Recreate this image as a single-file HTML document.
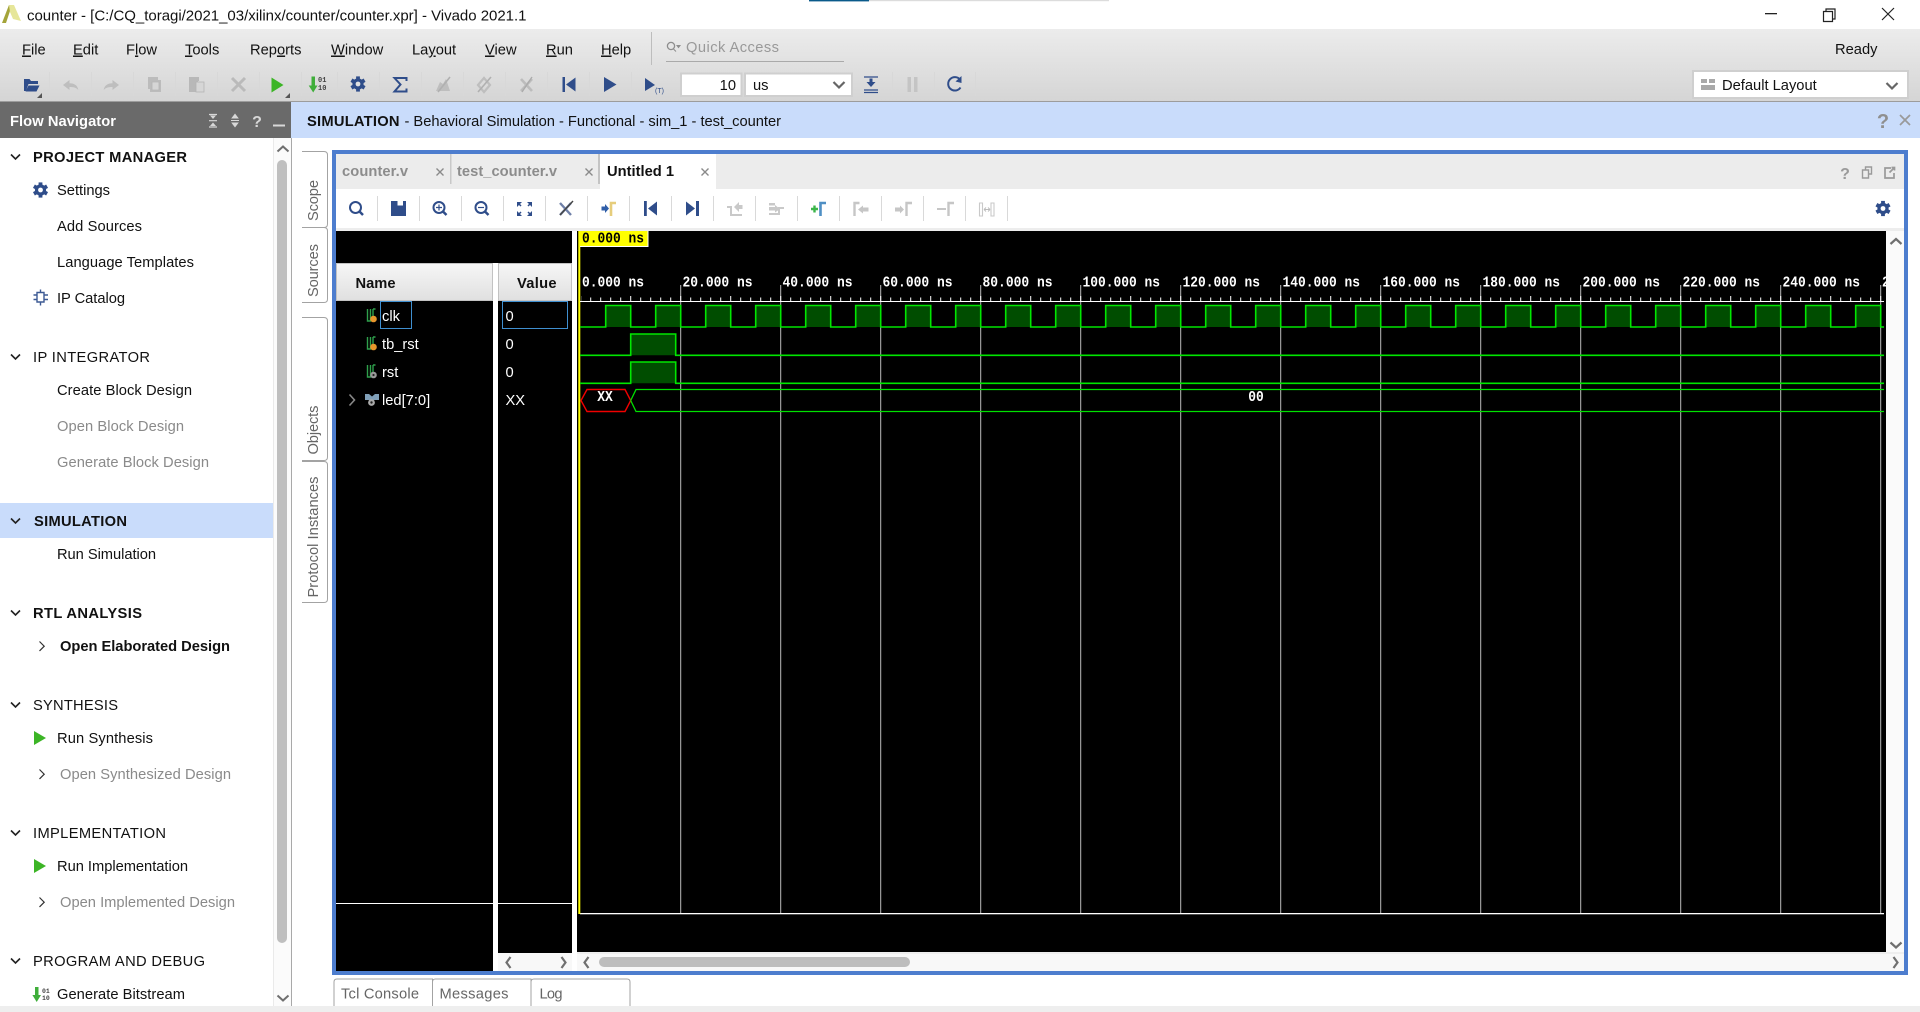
<!DOCTYPE html>
<html><head><meta charset="utf-8"><title>counter - Vivado 2021.1</title>
<style>
html,body{margin:0;padding:0;background:#fff;width:1920px;height:1012px;overflow:hidden}
svg{position:absolute;left:0;top:0;display:block}
text{font-family:"Liberation Sans",sans-serif;font-size:14.7px;fill:#111;white-space:pre}
.b{font-weight:bold}
.g{fill:#8a8a8a}
.w{fill:#fff}
.m{font-family:"Liberation Mono",monospace;font-size:15px;font-weight:bold;fill:#fff}
.s{fill:none;stroke-linecap:butt}
</style></head><body>
<svg width="1920" height="1012" viewBox="0 0 1920 1012" xmlns="http://www.w3.org/2000/svg">
<defs>
<linearGradient id="tb" x1="0" y1="0" x2="0" y2="1"><stop offset="0" stop-color="#ececec"/><stop offset="1" stop-color="#d5d5d5"/></linearGradient>
<linearGradient id="hd" x1="0" y1="0" x2="0" y2="1"><stop offset="0" stop-color="#f6f6f6"/><stop offset="1" stop-color="#e0e0e0"/></linearGradient>
<g id="gear"><circle r="5.6" fill="#2f4d8a"/><g fill="#2f4d8a"><rect x="-1.9" y="-7.6" width="3.8" height="15.2"/><rect x="-1.9" y="-7.6" width="3.8" height="15.2" transform="rotate(60)"/><rect x="-1.9" y="-7.6" width="3.8" height="15.2" transform="rotate(120)"/></g><circle r="2.4" fill="currentColor"/></g>
<g id="sig"><path d="M.5 0V12H3.500V0M6 0V7M8.500 0H6" fill="none" stroke="#2fa04c" stroke-width="1.400"/></g>
</defs>

<!-- title bar -->
<rect width="1920" height="29" fill="#fff"/>
<rect x="809" y="0" width="60" height="1.400" fill="#0a5a8a"/><rect x="869" y="0" width="240" height="1.200" fill="#dcdcdc"/>
<polygon points="2,23 9,5 12,5 8,17 6,23" fill="#a4a43a"/><polygon points="9,5 14,5 21,21 13,19 10,12" fill="#e6e69a"/>
<text x="27" y="20.500" style="font-size:15px" textLength="499.500">counter - [C:/CQ_toragi/2021_03/xilinx/counter/counter.xpr] - Vivado 2021.1</text>
<rect x="1765" y="13" width="12" height="1.300" fill="#222"/>
<path d="M1823.500 11.500h9v10h-9zM1826 11.500v-2.500h9v10h-2.500" fill="none" stroke="#222" stroke-width="1.200"/>
<path d="M1882 8l12 12M1894 8l-12 12" stroke="#222" stroke-width="1.200" fill="none"/>

<!-- menu/tool -->
<rect x="0" y="29" width="1920" height="72" fill="url(#tb)"/>
<rect x="0" y="101" width="1920" height="1" fill="#9c9c9c"/>
<text x="22" y="54.500"><tspan style="text-decoration:underline">F</tspan>ile</text>
<text x="73" y="54.500"><tspan style="text-decoration:underline">E</tspan>dit</text>
<text x="126" y="54.500">F<tspan style="text-decoration:underline">l</tspan>ow</text>
<text x="185" y="54.500"><tspan style="text-decoration:underline">T</tspan>ools</text>
<text x="250" y="54.500">Rep<tspan style="text-decoration:underline">o</tspan>rts</text>
<text x="331" y="54.500"><tspan style="text-decoration:underline">W</tspan>indow</text>
<text x="412" y="54.500">La<tspan style="text-decoration:underline">y</tspan>out</text>
<text x="485" y="54.500"><tspan style="text-decoration:underline">V</tspan>iew</text>
<text x="546" y="54.500"><tspan style="text-decoration:underline">R</tspan>un</text>
<text x="601" y="54.500"><tspan style="text-decoration:underline">H</tspan>elp</text>
<rect x="651" y="32" width="1" height="33" fill="#bdbdbd"/>
<circle cx="671" cy="46" r="3.600" fill="none" stroke="#8d8d8d" stroke-width="1.300"/><path d="M673.500 49l2.500 2.500M677 45.500h3l-1.500 2z" stroke="#8d8d8d" fill="#8d8d8d"/>
<text x="686" y="52" style="fill:#999" textLength="93">Quick Access</text>
<rect x="666" y="61" width="178" height="1" fill="#aaa"/>
<text x="1835" y="54">Ready</text>

<!-- toolbar separators -->
<path d="M49.500 72v24M91.500 72v24M133.500 72v24M175.500 72v24M217.500 72v24M259.500 72v24M301.500 72v24M337.500 72v24M379.500 72v24M421.500 72v24M463.500 72v24M505.500 72v24M547.500 72v24M589.500 72v24M631.500 72v24M892.500 72v24M934.500 72v24M975.500 72v24" stroke="#d8d8d8" stroke-width="1"/>
<!-- open -->
<path d="M24 91V79h5.500l1.500 2h7v3H28.500L26 91z" fill="#2f4d8a"/><path d="M28.500 85.500H39.500L36.500 91.500H25.500z" fill="#2f4d8a"/>
<polygon points="42,93 42,98 37,98" fill="#555"/>
<!-- undo redo -->
<path d="M63 85l6.500-5v3.200c5 0 8.200 2.300 8.800 6.800-2.300-2.700-5.300-3-8.800-3V90z" fill="#bebebe"/>
<path d="M119 85l-6.500-5v3.200c-5 0-8.200 2.300-8.800 6.800 2.300-2.700 5.300-3 8.800-3V90z" fill="#bebebe"/>
<!-- copy paste -->
<path d="M148 77h10v3h3v12h-11v-3h-2z" fill="#bcbcbc"/><path d="M152 82h7v8h-7z" fill="#d6d6d6" stroke="#b5b5b5" stroke-width=".8"/>
<path d="M189 77h10v4h-1v11h-9z" fill="#b8b8b8"/><rect x="196" y="82" width="8" height="10" fill="#d6d6d6" stroke="#b5b5b5" stroke-width=".8"/>
<path d="M232 78l13 13M245 78l-13 13" stroke="#bababa" stroke-width="3" fill="none"/>
<!-- run -->
<polygon points="271.500,77.500 283.500,85 271.500,92.500" fill="#3cb526"/><polygon points="290,93 290,98 285,98" fill="#555"/>
<!-- bitstream -->
<path d="M311.500 76.500h3.500v9h2.500l-4.300 7-4.500-7h2.800z" fill="#3fae3a"/>
<text x="318" y="82" style="font-family:'Liberation Mono',monospace;font-size:7px;font-weight:bold;fill:#444">01</text><text x="318" y="90" style="font-family:'Liberation Mono',monospace;font-size:7px;font-weight:bold;fill:#444">10</text>
<use href="#gear" x="358" y="84" color="#e2e2e2"/>
<path d="M406.500 81v-3H394.500l6 6.500-6 7h12v-3" fill="none" stroke="#2f4d8a" stroke-width="2"/>
<!-- grey icons -->
<path d="M436 91h14l-4-12-3 5-3-2z" fill="#bebebe"/><path d="M438 92l12-15" stroke="#b0b0b0" stroke-width="1.600"/>
<path d="M478 85l6-7 6 7-6 7z" fill="none" stroke="#bebebe" stroke-width="2.200"/><path d="M478 92l13-15" stroke="#b0b0b0" stroke-width="1.600"/>
<path d="M521 79l11 12M532 79l-11 12" stroke="#bcbcbc" stroke-width="2.600"/><path d="M522 92l10-15" stroke="#aaa" stroke-width="1.300"/>
<rect x="562.500" y="77" width="2.500" height="15" fill="#2f4d8a"/><polygon points="575.500,77.500 566,84.500 575.500,91.500" fill="#2f4d8a"/>
<polygon points="604,77 616.500,84.500 604,92" fill="#2f4d8a"/>
<polygon points="645,78 655,85 645,91" fill="#2f4d8a"/>
<text x="655" y="93" style="font-size:7px;fill:#2f4d8a">(T)</text>
<!-- input -->
<rect x="681" y="73.500" width="60.500" height="22.500" fill="#fff" stroke="#cfcfcf" stroke-width="2"/>
<text x="736" y="90" text-anchor="end">10</text>
<rect x="745" y="73.500" width="107" height="22.500" fill="#fff" stroke="#cfcfcf" stroke-width="2"/>
<text x="753" y="90">us</text>
<path d="M833.500 82l5.500 5.500 5.500-5.500" fill="none" stroke="#666" stroke-width="2.200"/>
<path d="M864 77h14M864 90h14M864 92.500h14" stroke="#2f4d8a" stroke-width="1.300"/><path d="M869.500 78.500h3v3.500h3l-4.500 5-4.500-5h3z" fill="#2f4d8a"/>
<rect x="907.500" y="77" width="3.500" height="15" fill="#c4c4c4"/><rect x="914" y="77" width="3.500" height="15" fill="#c4c4c4"/>
<path d="M960 79.500a6.700 6.700 0 1 0 .5 8" fill="none" stroke="#2f4d8a" stroke-width="2"/><polygon points="961.500,76 961.500,83 955.500,81.500" fill="#2f4d8a"/>
<!-- layout combo -->
<rect x="1693" y="71" width="215" height="27" fill="#fff" stroke="#cfcfcf" stroke-width="2"/>
<path d="M1701 79h6v4h-6zM1709 79h6v4h-6zM1701 85h14v5h-14z" fill="#a9a9a9"/>
<text x="1722" y="90">Default Layout</text>
<path d="M1886.500 83l5.500 5.500 5.500-5.500" fill="none" stroke="#666" stroke-width="2.200"/>

<!-- flow nav header -->
<rect x="0" y="102" width="291" height="36" fill="#6a6a6a"/>
<text x="10" y="126" class="b w" textLength="106">Flow Navigator</text>
<path d="M209 114.500h8M209 127h8M209 120.700h8" stroke="#d8d8d8" stroke-width="1.200"/><path d="M210 115.500h6l-3 3.500zM210 126l3-3.500 3 3.500z" fill="#d8d8d8"/>
<path d="M235 113.500l3.800 5h-7.600zM235 127.500l3.800-5h-7.600z" fill="#d8d8d8"/><path d="M231 120.500h8" stroke="#d8d8d8"/>
<text x="257" y="127" text-anchor="middle" class="b" style="fill:#d8d8d8;font-size:16px">?</text>
<rect x="273" y="124.500" width="12" height="2" fill="#d8d8d8"/>
<rect x="291" y="102" width="1629" height="36" fill="#c9dcfb"/>
<text x="307" y="126" class="b" textLength="92.500">SIMULATION</text>
<text x="404.500" y="126" textLength="376.500">- Behavioral Simulation - Functional - sim_1 - test_counter</text>
<text x="1883" y="128" text-anchor="middle" class="b" style="fill:#8f8f8f;font-size:20px">?</text>
<path d="M1900 115l10 10M1910 115l-10 10" stroke="#999" stroke-width="1.700"/>

<!-- left panel -->
<rect x="0" y="138" width="273" height="868" fill="#fff"/>
<rect x="273" y="138" width="18" height="868" fill="#fbfbfb"/><rect x="273" y="138" width="1" height="868" fill="#eaeaea"/>
<rect x="277" y="160" width="10" height="783" rx="5" fill="#bfbfbf"/>
<path d="M277.500 151.500l5.500-5 5.500 5" fill="none" stroke="#6f6f6f" stroke-width="2"/>
<path d="M277.500 995.500l5.500 5 5.500-5" fill="none" stroke="#6f6f6f" stroke-width="2"/>
<rect x="291" y="138" width="1" height="868" fill="#a9a9a9"/>
<rect x="0" y="503" width="273" height="35" fill="#c9dcfb"/>
<g fill="none" stroke="#222" stroke-width="1.600">
<path d="M11 154.500l4.500 4.500 4.500-4.500"/><path d="M11 354.500l4.500 4.500 4.500-4.500"/><path d="M11 518.500l4.500 4.500 4.500-4.500"/><path d="M11 610.500l4.500 4.500 4.500-4.500"/><path d="M11 702.500l4.500 4.500 4.500-4.500"/><path d="M11 830.500l4.500 4.500 4.500-4.500"/><path d="M11 958.500l4.500 4.500 4.500-4.500"/>
</g>
<g fill="none" stroke="#333" stroke-width="1.200">
<path d="M39.500 641.500l4.700 4.700-4.700 4.700"/><path d="M39.500 769.500l4.700 4.700-4.700 4.700"/><path d="M39.500 897.500l4.700 4.700-4.700 4.700"/>
</g>
<text x="33" y="162" class="b" textLength="154">PROJECT MANAGER</text>
<use href="#gear" x="40.500" y="190" color="#fff"/>
<text x="57" y="195" textLength="53">Settings</text>
<text x="57" y="231" textLength="85">Add Sources</text>
<text x="57" y="267" textLength="137">Language Templates</text>
<path d="M37 292.500h7v9.500h-7zM40.500 289.500v3M40.500 302v3.500M33.500 295h3.500M33.500 299.500h3.500M44 295h4M44 299.500h4" fill="none" stroke="#3d5a94" stroke-width="1.400"/>
<text x="57" y="303" textLength="68">IP Catalog</text>
<text x="33" y="362" textLength="117">IP INTEGRATOR</text>
<text x="57" y="395" textLength="135">Create Block Design</text>
<text x="57" y="431" class="g" textLength="127">Open Block Design</text>
<text x="57" y="467" class="g" textLength="152">Generate Block Design</text>
<text x="34" y="526" class="b" textLength="93">SIMULATION</text>
<text x="57" y="559" textLength="99">Run Simulation</text>
<text x="33" y="618" class="b" textLength="109">RTL ANALYSIS</text>
<text x="60" y="651" class="b" textLength="170">Open Elaborated Design</text>
<text x="33" y="710" textLength="85">SYNTHESIS</text>
<polygon points="34,731 46,738 34,745" fill="#3cb526"/>
<text x="57" y="743" textLength="96">Run Synthesis</text>
<text x="60" y="779" class="g" textLength="171">Open Synthesized Design</text>
<text x="33" y="838" textLength="133">IMPLEMENTATION</text>
<polygon points="34,859 46,866 34,873" fill="#3cb526"/>
<text x="57" y="871" textLength="131">Run Implementation</text>
<text x="60" y="907" class="g" textLength="175">Open Implemented Design</text>
<text x="33" y="966" textLength="172">PROGRAM AND DEBUG</text>
<path d="M35 987h3.500v8h2.500l-4.300 7-4.300-7h2.600z" fill="#3fae3a"/>
<text x="42" y="993" style="font-family:'Liberation Mono',monospace;font-size:6.500px;font-weight:bold;fill:#444">01</text><text x="42" y="1000" style="font-family:'Liberation Mono',monospace;font-size:6.500px;font-weight:bold;fill:#444">10</text>
<text x="57" y="999" textLength="128">Generate Bitstream</text>

<!-- side tabs -->
<g fill="none" stroke="#a3a3a3" stroke-width="1">
<path d="M302 151.500h22q3.500 0 3.500 3.500v69q0 3.500-3.500 3.500H302"/>
<path d="M302 227.500h22q3.500 0 3.500 3.500v68q0 3.500-3.500 3.500H302"/>
<path d="M302 317.500h22q3.500 0 3.500 3.500v136q0 3.500-3.500 3.500H302"/>
<path d="M302 461.500h22q3.500 0 3.500 3.500v134q0 3.500-3.500 3.500H302"/>
</g>
<text transform="translate(318,221) rotate(-90)" style="fill:#666" textLength="41">Scope</text>
<text transform="translate(318,297) rotate(-90)" style="fill:#666" textLength="53">Sources</text>
<text transform="translate(318,454.500) rotate(-90)" style="fill:#666" textLength="49">Objects</text>
<text transform="translate(318,597.500) rotate(-90)" style="fill:#666" textLength="121">Protocol Instances</text>

<!-- main frame -->
<rect x="332" y="150" width="1576" height="825" fill="#4d7dce"/>
<rect x="336" y="154" width="1568" height="817" fill="#fff"/>
<rect x="336" y="154" width="1568" height="35" fill="#ececec"/>
<rect x="600" y="154" width="116" height="35" fill="#fff"/>
<rect x="450" y="154" width="1.500" height="30" fill="#c8c8c8"/>
<rect x="598" y="154" width="2" height="30" fill="#c4c4c4"/>
<text x="342" y="176" class="b" style="fill:#8c8c8c" textLength="66">counter.v</text>
<text x="457" y="176" class="b" style="fill:#8c8c8c" textLength="100">test_counter.v</text>
<text x="607" y="176" class="b" textLength="67">Untitled 1</text>
<path d="M436.500 168.500l7 7M443.500 168.500l-7 7M585.500 168.500l7 7M592.500 168.500l-7 7M701.500 168.500l7 7M708.500 168.500l-7 7" stroke="#8a8a8a" stroke-width="1.400"/>
<text x="1845" y="179" text-anchor="middle" class="b" style="fill:#9a9a9a;font-size:16px">?</text>
<path d="M1862.500 170h6v8h-6zM1865.500 170v-3h6v7h-3" fill="none" stroke="#9a9a9a" stroke-width="1.400"/>
<path d="M1891 168h-6v10h9v-5M1889.500 172.500l4.500-4.500M1891.500 167.500h3v3" fill="none" stroke="#9a9a9a" stroke-width="1.700"/>

<!-- wave toolbar -->
<rect x="336" y="228" width="1568" height="3" fill="#ededed"/>
<path d="M377.500 196v25M419.500 196v25M461.500 196v25M503.500 196v25M545.500 196v25M587.500 196v25M629.500 196v25M671.500 196v25M713.500 196v25M755.500 196v25M797.500 196v25M839.500 196v25M881.500 196v25M923.500 196v25M965.500 196v25M1007.500 196v25" stroke="#d9d9d9" stroke-width="1"/>
<g fill="none" stroke="#2f4d8a" stroke-width="2">
<circle cx="355.500" cy="207.500" r="5.500"/><path d="M359.500 211.500l3.500 3.500" stroke-width="2.500"/>
<circle cx="439" cy="207.500" r="5.500"/><path d="M443 211.500l3.500 3.500" stroke-width="2.500"/><path d="M436 207.500h6M439 204.500v6" stroke-width="1.200"/>
<circle cx="481" cy="207.500" r="5.500"/><path d="M485 211.500l3.500 3.500" stroke-width="2.500"/><path d="M478 207.500h6" stroke-width="1.200"/>
</g>
<path d="M391 201h15v15h-15z" fill="#2f4d8a"/><rect x="397.500" y="201" width="5.500" height="4.500" fill="#fff"/>
<g fill="#2f4d8a"><polygon points="517,202 522,202 517,207"/><polygon points="532,202 527,202 532,207"/><polygon points="517,216 522,216 517,211"/><polygon points="532,216 527,216 532,211"/></g>
<path d="M518 203l3 3M531 203l-3 3M518 215l3-3M531 215l-3-3" stroke="#2f4d8a" stroke-width="1.500"/>
<path d="M560 203l11 12M571 203l-11 12" stroke="#6f80a8" stroke-width="2.400"/><path d="M560 215l13-14" stroke="#444" stroke-width="1.400"/>
<path d="M601.500 206.500h3.500v-2.500l4 4.500-4 4.500v-2.500h-3.500z" fill="#2f5ea8"/>
<path d="M611 216v-13h5" fill="none" stroke="#e6cd7c" stroke-width="2.600"/>
<rect x="644" y="201" width="2.800" height="15" fill="#2f4d8a"/><polygon points="657,201.500 648,208.500 657,215.500" fill="#2f4d8a"/>
<polygon points="686,201.500 695,208.500 686,215.500" fill="#2f4d8a"/><rect x="696" y="201" width="3" height="15" fill="#2f4d8a"/>
<g fill="#c9c9c9">
<path d="M727 206h5v8h10v2h-12v-8h-3z"/><path d="M734 207l5-5v3h3.500v4H739v3z"/>
<path d="M769 203h6v2.500h-6zM769 207h6v-2l5 4-5 3.500v-2h-6z"/><path d="M769 213h9v-6h6v2h-4v6h-11z"/>
</g>
<path d="M811 209h7M814.500 205.500v7" stroke="#3cb54a" stroke-width="2.400"/>
<path d="M820.500 216v-13h5.500" fill="none" stroke="#4f8fc4" stroke-width="2.600"/>
<g fill="none" stroke="#c6c6c6" stroke-width="2.400">
<path d="M854.500 216v-13h5"/><path d="M906.500 216v-13h5.500"/><path d="M948.500 216v-13h5.500"/>
</g>
<path d="M858 209.500l5-4v2h5.500v4H863v2z" fill="#c6c6c6"/>
<path d="M895 207.500h5v-2l4 4-4 4v-2h-5z" fill="#c6c6c6"/>
<rect x="937" y="208" width="9" height="2" fill="#c6c6c6"/>
<path d="M979.500 203h3v13h-3zM991 203h3v13h-3z" fill="none" stroke="#c9c9c9" stroke-width="1.100"/><path d="M984 209.500h6M984 209.500l2-2M984 209.500l2 2M990 209.500l-2-2M990 209.500l-2 2" stroke="#bbb" stroke-width=".9" fill="none"/>
<use href="#gear" x="1883" y="208.500" color="#fff"/>

<!-- name/value panels -->
<rect x="336" y="231" width="236" height="721" fill="#000"/>
<rect x="336" y="231" width="157" height="740" fill="#000"/>
<rect x="498" y="263" width="74" height="690" fill="#000"/>
<rect x="493" y="263" width="5" height="708" fill="#fff"/>
<rect x="336.500" y="263.500" width="156" height="37" fill="url(#hd)" stroke="#c2c2c2"/>
<rect x="498.500" y="263.500" width="73" height="37" fill="url(#hd)" stroke="#c2c2c2"/>
<text x="355.500" y="288" class="b" textLength="40">Name</text>
<text x="517" y="288" class="b" textLength="39.500">Value</text>
<rect x="380.500" y="301.500" width="31" height="27" fill="none" stroke="#3f8fd0"/>
<rect x="502.500" y="301.500" width="65" height="27" fill="none" stroke="#3f8fd0"/>
<use href="#sig" x="367" y="309"/><circle cx="373.500" cy="319" r="3.300" fill="#e8962c"/>
<use href="#sig" x="367" y="337"/><circle cx="373.500" cy="347" r="3.300" fill="#e8962c"/>
<use href="#sig" x="367" y="365"/><circle cx="373.500" cy="375" r="3.300" fill="#999"/><circle cx="373.500" cy="375" r="1.100" fill="#222"/>
<path d="M365 394h4l3 2.500 3-2.500h4v6h-14z" fill="#7f9fb8"/><circle cx="371.500" cy="402.500" r="3.400" fill="#aaa"/><circle cx="371.500" cy="402.500" r="1.200" fill="#222"/>
<path d="M349.500 394.500l5 5.500-5 5.500" fill="none" stroke="#888" stroke-width="1.600"/>
<text x="382" y="321" class="w">clk</text>
<text x="382" y="349" class="w">tb_rst</text>
<text x="382" y="377" class="w">rst</text>
<text x="382" y="405" class="w">led[7:0]</text>
<text x="505.500" y="321" class="w">0</text>
<text x="505.500" y="349" class="w">0</text>
<text x="505.500" y="377" class="w">0</text>
<text x="505.500" y="405" class="w">XX</text>
<rect x="336" y="903" width="157" height="1" fill="#fff"/><rect x="498" y="903" width="74" height="1" fill="#fff"/>

<!-- wave area -->
<rect x="577" y="231" width="1309" height="721" fill="#000"/>
<rect x="572" y="263" width="5" height="708" fill="#fff"/>
<path d="M680.700 285V913M780.700 285V913M880.700 285V913M980.700 285V913M1080.700 285V913M1180.700 285V913M1280.700 285V913M1380.700 285V913M1480.700 285V913M1580.700 285V913M1680.700 285V913M1780.700 285V913M1880.700 285V913" stroke="#bcbcbc" stroke-width="1" fill="none"/>
<rect x="580" y="913" width="1304" height="1.300" fill="#fff"/>
<rect x="578.300" y="231" width="2" height="683" fill="#ffff00"/>
<rect x="580" y="231" width="68" height="15.500" fill="#ffff00"/><path d="M648 231v15.500h-68" fill="none" stroke="#fff" stroke-width="1"/>
<text x="582" y="242.500" class="m" style="fill:#000" lengthAdjust="spacingAndGlyphs" textLength="62">0.000 ns</text>
<g>
<text x="582" y="286.500" class="m" lengthAdjust="spacingAndGlyphs" textLength="62">0.000 ns</text>
<text x="682.500" y="286.500" class="m" lengthAdjust="spacingAndGlyphs" textLength="70">20.000 ns</text>
<text x="782.500" y="286.500" class="m" lengthAdjust="spacingAndGlyphs" textLength="70">40.000 ns</text>
<text x="882.500" y="286.500" class="m" lengthAdjust="spacingAndGlyphs" textLength="70">60.000 ns</text>
<text x="982.500" y="286.500" class="m" lengthAdjust="spacingAndGlyphs" textLength="70">80.000 ns</text>
<text x="1082.500" y="286.500" class="m" lengthAdjust="spacingAndGlyphs" textLength="77.500">100.000 ns</text>
<text x="1182.500" y="286.500" class="m" lengthAdjust="spacingAndGlyphs" textLength="77.500">120.000 ns</text>
<text x="1282.500" y="286.500" class="m" lengthAdjust="spacingAndGlyphs" textLength="77.500">140.000 ns</text>
<text x="1382.500" y="286.500" class="m" lengthAdjust="spacingAndGlyphs" textLength="77.500">160.000 ns</text>
<text x="1482.500" y="286.500" class="m" lengthAdjust="spacingAndGlyphs" textLength="77.500">180.000 ns</text>
<text x="1582.500" y="286.500" class="m" lengthAdjust="spacingAndGlyphs" textLength="77.500">200.000 ns</text>
<text x="1682.500" y="286.500" class="m" lengthAdjust="spacingAndGlyphs" textLength="77.500">220.000 ns</text>
<text x="1782.500" y="286.500" class="m" lengthAdjust="spacingAndGlyphs" textLength="77.500">240.000 ns</text>
<text x="1882" y="286.500" class="m" lengthAdjust="spacingAndGlyphs" textLength="7.750">2</text>
</g>
<defs><pattern id="tk" x="580.700" y="296" width="50" height="6" patternUnits="userSpaceOnUse"><path d="M10 1.500V6M20 1.500V6M30 1.500V6M40 1.500V6M50 0V6M0 0V6" stroke="#fff" stroke-width="1"/></pattern></defs>
<rect x="581" y="296" width="1303" height="5.500" fill="url(#tk)"/>
<rect x="580" y="301" width="1304" height="1" fill="#fff"/>

<!-- clk: 26 pulses, 605.7 to 1880.7 -->
<path d="M580 327H605.700
v-21.500h25v21.500h25 v-21.500h25v21.500h25 v-21.500h25v21.500h25 v-21.500h25v21.500h25 v-21.500h25v21.500h25
v-21.500h25v21.500h25 v-21.500h25v21.500h25 v-21.500h25v21.500h25 v-21.500h25v21.500h25 v-21.500h25v21.500h25
v-21.500h25v21.500h25 v-21.500h25v21.500h25 v-21.500h25v21.500h25 v-21.500h25v21.500h25 v-21.500h25v21.500h25
v-21.500h25v21.500h25 v-21.500h25v21.500h25 v-21.500h25v21.500h25 v-21.500h25v21.500h25 v-21.500h25v21.500h25
v-21.500h25v21.500h25 v-21.500h25v21.500h25 v-21.500h25v21.500h25 v-21.500h25v21.500h25 v-21.500h25v21.500h25
v-21.500h25v21.500H1884" fill="#004d00" stroke="#00e600" stroke-width="1.600"/>
<!-- tb_rst / rst -->
<path d="M580 355.300H630.700V334H675.700V355.300H1884" fill="#004d00" stroke="#00e600" stroke-width="1.600"/>
<path d="M580 383.300H630.700V362H675.700V383.300H1884" fill="#004d00" stroke="#00e600" stroke-width="1.600"/>
<!-- led -->
<path d="M581 400.500L587 389.500H625L630.700 400.500L625 411.500H587Z" fill="none" stroke="#f00000" stroke-width="1.400"/>
<path d="M630.700 400.500L636 389.500H1884M630.700 400.500L636 411.500H1884" fill="none" stroke="#00e000" stroke-width="1.300"/>
<text x="605" y="401" text-anchor="middle" class="m" lengthAdjust="spacingAndGlyphs" textLength="15.500">XX</text>
<text x="1256" y="401" text-anchor="middle" class="m" lengthAdjust="spacingAndGlyphs" textLength="15.500">00</text>

<!-- scrollbars -->
<rect x="1886" y="231" width="18" height="721" fill="#fafafa"/>
<path d="M1890.500 244l5.500-5 5.500 5" fill="none" stroke="#6f6f6f" stroke-width="2.200"/>
<path d="M1890.500 942.500l5.500 5 5.500-5" fill="none" stroke="#6f6f6f" stroke-width="2.200"/>
<rect x="577" y="952" width="1327" height="2" fill="#eeeeee"/>
<rect x="498" y="953" width="74" height="18" fill="#f8f8f8"/>
<rect x="577" y="954" width="1327" height="17" fill="#f8f8f8"/>
<path d="M510.500 957l-4 5.500 4 5.500M561.500 957l4 5.500-4 5.500M588.500 957l-4 5.500 4 5.500M1893.500 957l4 5.500-4 5.500" fill="none" stroke="#707070" stroke-width="2.200"/>
<rect x="599" y="957" width="311" height="10" rx="5" fill="#bdbdbd"/>

<!-- bottom tabs -->
<path d="M334 1006V982q0-3 3-3H432.500V1006M432.500 982q0-3 3-3H531V1006M531 982q0-3 3-3H627q3 0 3 3V1006" fill="none" stroke="#a3a3a3"/>
<text x="341" y="998.500" style="fill:#666" textLength="78">Tcl Console</text>
<text x="439.500" y="998.500" style="fill:#666" textLength="69">Messages</text>
<text x="539.500" y="998.500" style="fill:#666" textLength="23">Log</text>
<rect x="0" y="1006" width="1920" height="6" fill="#eeeeee"/>
</svg>
</body></html>
